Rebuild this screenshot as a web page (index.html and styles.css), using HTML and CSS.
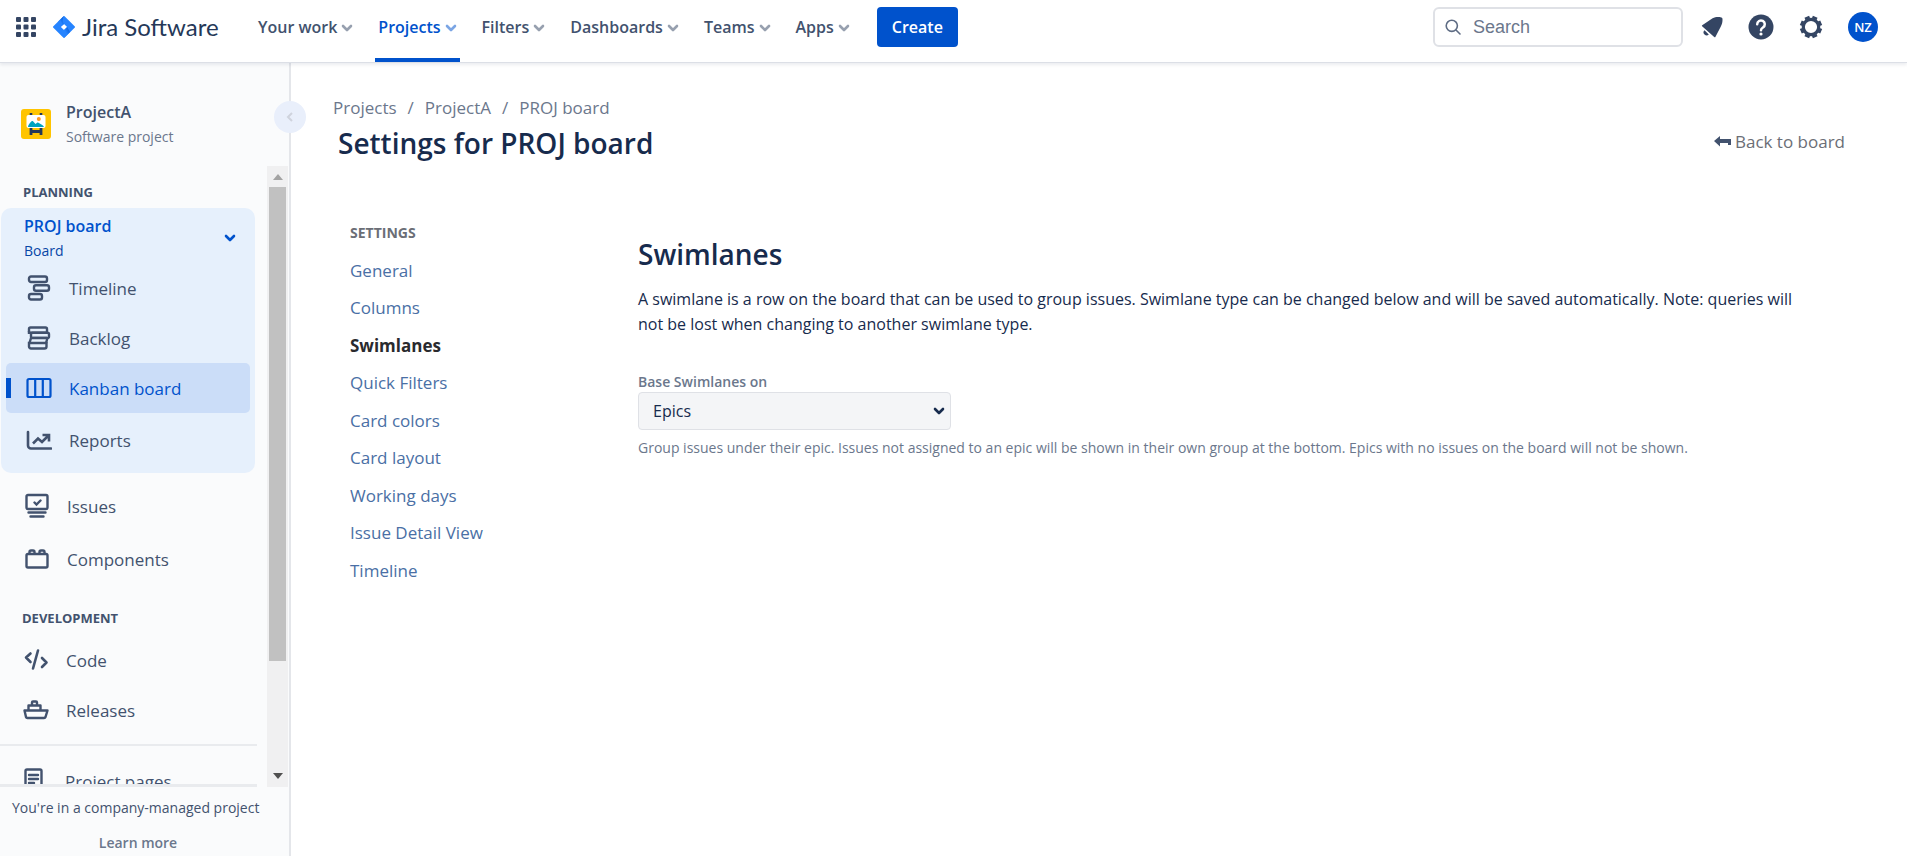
FILE: index.html
```html
<!DOCTYPE html>
<html lang="en">
<head>
<meta charset="utf-8">
<title>Settings for PROJ board - Jira Software</title>
<link rel="stylesheet" href="styles.css">
</head>
<body>
<svg class="defs" aria-hidden="true">
  <symbol id="chevron" viewBox="0 0 12 8"><path d="M2 2l4 4 4-4" fill="none" stroke="currentColor" stroke-width="2.6" stroke-linecap="round" stroke-linejoin="round"/></symbol>
</svg>
<header class="topbar">
  <button class="icon-btn switcher" aria-label="Switch to">
    <svg width="20" height="20" viewBox="0 0 20 20" fill="#344563"><rect width="5" height="5" rx="1"/><rect x="7.5" width="5" height="5" rx="1"/><rect x="15" width="5" height="5" rx="1"/><rect y="7.5" width="5" height="5" rx="1"/><rect x="7.5" y="7.5" width="5" height="5" rx="1"/><rect x="15" y="7.5" width="5" height="5" rx="1"/><rect y="15" width="5" height="5" rx="1"/><rect x="7.5" y="15" width="5" height="5" rx="1"/><rect x="15" y="15" width="5" height="5" rx="1"/></svg>
  </button>
  <a class="brand" href="#">
    <svg width="22" height="22" viewBox="0 0 22 22"><defs><linearGradient id="g1" x1="0.9" y1="0.1" x2="0.4" y2="0.6"><stop offset="0" stop-color="#0052cc"/><stop offset="1" stop-color="#2684ff"/></linearGradient></defs><path fill="#2684ff" d="M10.2.4a1.1 1.1 0 0 1 1.6 0l9.8 9.8a1.1 1.1 0 0 1 0 1.6l-9.8 9.8a1.1 1.1 0 0 1-1.6 0L.4 11.8a1.1 1.1 0 0 1 0-1.6zM11 7.9L7.900 11l3.100 3.100L14.100 11z" fill-rule="evenodd"/><path fill="url(#g1)" d="M11 7.900C9 5.900 9 2.600 11 0l-5.800 5.500 4.100 4.100z"/><path fill="url(#g1)" d="M14.100 11L11 14.100c2 2.200 2 5.300 0 7.900l6-6.100z" opacity=".8"/></svg>
    <span>Jira Software</span>
  </a>
  <nav class="mainnav" aria-label="Main">
    <button class="nav-item">Your work<svg width="12" height="8"><use href="#chevron"/></svg></button>
    <button class="nav-item active">Projects<svg width="12" height="8"><use href="#chevron"/></svg></button>
    <button class="nav-item">Filters<svg width="12" height="8"><use href="#chevron"/></svg></button>
    <button class="nav-item">Dashboards<svg width="12" height="8"><use href="#chevron"/></svg></button>
    <button class="nav-item">Teams<svg width="12" height="8"><use href="#chevron"/></svg></button>
    <button class="nav-item">Apps<svg width="12" height="8"><use href="#chevron"/></svg></button>
  </nav>
  <button class="create">Create</button>
  <div class="tools">
    <label class="search">
      <svg width="16" height="16" viewBox="0 0 16 16" fill="none" stroke="#5e6c84" stroke-width="1.6" stroke-linecap="round"><circle cx="6.800" cy="6.800" r="5.600"/><path d="M11 11l4 4"/></svg>
      <input type="text" placeholder="Search" aria-label="Search">
    </label>
    <button class="icon-btn bell" aria-label="Notifications"><svg width="22" height="22" viewBox="0 0 22 22" fill="#344563"><path d="M1.200 9.200L11.600 2.300C14.300.9 17.500.8 20.300 1.400c1.100.3 1.200 1 1.200 1.900.1 2.500-.4 4.800-1.800 7.400l-5.200 10c-.3.600-.8.700-1.300.2L1.100 10.300c-.4-.4-.4-.8.100-1.100z"/><path d="M3.500 14.200l4.300 4.300a3 3 0 0 1-4.300-4.300z"/></svg></button>
    <button class="icon-btn help" aria-label="Help"><svg width="26" height="26" viewBox="0 0 26 26"><circle cx="13" cy="13" r="12.500" fill="#344563"/><path d="M9.200 10.200a3.800 3.800 0 1 1 5.900 3.200c-1.400.9-2.100 1.300-2.100 2.800" fill="none" stroke="#fff" stroke-width="2.500" stroke-linecap="round"/><circle cx="13" cy="20" r="1.600" fill="#fff"/></svg></button>
    <button class="icon-btn gear" aria-label="Settings"><svg width="24" height="24" viewBox="0 0 24 24" fill="none" stroke="#344563"><circle cx="12" cy="12" r="7.700" stroke-width="3.200"/><g stroke-width="5"><path d="M15.200 4.200l1-2.400M19.800 8.800l2.400-1M19.800 15.200l2.400 1M15.200 19.800l1 2.400M8.800 19.800l-1 2.400M4.200 15.200l-2.400 1M4.200 8.800l-2.400-1M8.800 4.200l-1-2.400"/></g></svg></button>
    <button class="avatar" aria-label="Account">NZ</button>
  </div>
</header>

<div class="shell">
  <aside class="sidebar">
    <div class="project">
      <svg width="30" height="30" viewBox="0 0 30 30"><rect width="30" height="30" rx="3" fill="#ffc400"/><path d="M10 4v3M20 4v3" stroke="#253858" stroke-width="2.600"/><path d="M10 19v7M20 19v7M9 22.500h12" stroke="#253858" stroke-width="2.800"/><rect x="5.500" y="6" width="19" height="13" rx="2" fill="#fff"/><path d="M7 18c0-2 2-4.500 3.600-5.800.5-.4 1-.3 1.400.1l2.500 2.600 1.600-1.100c.5-.3.900-.3 1.300 0 2.300 1.400 5 2.700 5.600 4.200z" fill="#00a3bf"/><circle cx="17.800" cy="10" r="2" fill="#ff991f"/></svg>
      <div>
        <div class="project-name">ProjectA</div>
        <div class="project-type">Software project</div>
      </div>
    </div>
    <div class="scroll-frame">
      <nav class="scroll-body" aria-label="Project">
        <h2 class="group-title">PLANNING</h2>
        <div class="board-group">
          <button class="board-head">
            <span class="board-text"><span class="board-name">PROJ board</span><span class="board-kind">Board</span></span>
            <svg width="12" height="8"><use href="#chevron"/></svg>
          </button>
          <a class="side-link" href="#"><svg width="26" height="26" viewBox="0 0 26 26" fill="none" stroke="currentColor" stroke-width="2.400"><rect x="3" y="1.500" width="18" height="5.500" rx="2"/><rect x="8" y="10.200" width="15" height="5.500" rx="2"/><rect x="3" y="19" width="13" height="5.500" rx="2"/></svg>Timeline</a>
          <a class="side-link" href="#"><svg width="26" height="26" viewBox="0 0 26 26" fill="none" stroke="currentColor" stroke-width="2.400"><rect x="3" y="2.500" width="18" height="5.200" rx="1.500"/><rect x="5" y="7.700" width="18" height="5.200" rx="1.500"/><path d="M3 6v3M5 13l-1.500 5M21.500 13L20 18"/><path d="M4 13h17M3 18h17.500v3.500a2 2 0 0 1-2 2H5a2 2 0 0 1-2-2z"/></svg>Backlog</a>
          <a class="side-link selected" href="#" aria-current="page"><svg width="26" height="26" viewBox="0 0 26 26" fill="none" stroke="currentColor" stroke-width="2.200"><rect x="1.500" y="4" width="23" height="18" rx="1.500"/><path d="M9.200 4v18M16.800 4v18"/></svg>Kanban board</a>
          <a class="side-link reports" href="#"><svg width="26" height="26" viewBox="0 0 26 26" fill="none" stroke="currentColor" stroke-width="2.600"><path d="M2 5v13.500a3 3 0 0 0 3 3h20" stroke-linecap="round"/><path d="M7 16.500l5-5 4 3.500 6.500-6.500M16.500 8H23v6.500"/></svg>Reports</a>
        </div>
        <div class="loose-group">
          <a class="side-link" href="#"><svg width="26" height="26" viewBox="0 0 26 26" fill="none" stroke="currentColor" stroke-width="2.400" stroke-linecap="round"><rect x="2.500" y="2" width="21" height="14" rx="1.500"/><path d="M10.500 9.500l2 2 4-4M4.500 19.500h17M6.500 23.500h13"/></svg>Issues</a>
          <a class="side-link" href="#"><svg width="26" height="26" viewBox="0 0 26 26" fill="none" stroke="currentColor" stroke-width="2.400"><rect x="2.500" y="8" width="21" height="13.500" rx="1.500"/><path d="M5.500 8V6a1.500 1.500 0 0 1 1.500-1.500h2A1.500 1.500 0 0 1 10.500 6v2M15.500 8V6A1.500 1.500 0 0 1 17 4.500h2A1.500 1.500 0 0 1 20.500 6v2"/></svg>Components</a>
        </div>
        <h2 class="group-title dev">DEVELOPMENT</h2>
        <div class="dev-group">
          <a class="side-link" href="#"><svg width="26" height="26" viewBox="0 0 26 26" fill="none" stroke="currentColor" stroke-width="2.600" stroke-linecap="round" stroke-linejoin="round"><path d="M15 3.500l-5 18M7.500 6.500L3 10.500l4.500 4.500M19 11l4.500 4.500L19 20"/></svg>Code</a>
          <a class="side-link" href="#"><svg width="26" height="26" viewBox="0 0 26 26" fill="none" stroke="currentColor" stroke-width="2.400" stroke-linejoin="round"><path d="M1.500 13.500h23l-2 6.500a1.500 1.500 0 0 1-1.400 1H4.400A1.500 1.500 0 0 1 3 20zM5.500 13.500V8.500h12v5M9 8V5.500q0-1 1-1h3q1 0 1 1V8"/></svg>Releases</a>
        </div>
        <a class="side-link pages" href="#"><svg width="26" height="26" viewBox="0 0 26 26" fill="none" stroke="currentColor" stroke-width="2.400" stroke-linecap="round"><rect x="3.500" y="1.500" width="16" height="22" rx="1.500"/><path d="M7 7h9M7 11h9M7 15h5"/></svg>Project pages</a>
      </nav>
      <div class="scrollbar" aria-hidden="true">
        <svg width="10" height="6" viewBox="0 0 10 6"><path d="M0 6l5-6 5 6z" fill="#a3a3a3"/></svg>
        <div class="thumb"></div>
        <svg width="10" height="6" viewBox="0 0 10 6"><path d="M0 0h10L5 6z" fill="#505050"/></svg>
      </div>
    </div>
    <footer class="side-foot">
      <p>You're in a company-managed project</p>
      <a href="#">Learn more</a>
    </footer>
    <button class="collapse" aria-label="Collapse sidebar"><svg width="8" height="10" viewBox="0 0 8 10" fill="none" stroke="#cfd3dd" stroke-width="2"><path d="M6 1L2 5l4 4"/></svg></button>
  </aside>

  <main class="content">
    <nav class="crumbs" aria-label="Breadcrumb"><a href="#">Projects</a><span>/</span><a href="#">ProjectA</a><span>/</span><a href="#">PROJ board</a></nav>
    <div class="title-row">
      <h1>Settings for PROJ board</h1>
      <a class="back" href="#"><svg width="17" height="11" viewBox="0 0 17 11"><path d="M0 5L6 0v3h11v6h-3V7H6v3.500z" fill="#42526e"/></svg>Back to board</a>
    </div>
    <div class="columns">
      <nav class="settings" aria-label="Settings">
        <h2>SETTINGS</h2>
        <ul>
          <li><a href="#">General</a></li>
          <li><a href="#">Columns</a></li>
          <li><a class="current" href="#">Swimlanes</a></li>
          <li><a href="#">Quick Filters</a></li>
          <li><a href="#">Card colors</a></li>
          <li><a href="#">Card layout</a></li>
          <li><a href="#">Working days</a></li>
          <li><a href="#">Issue Detail View</a></li>
          <li><a href="#">Timeline</a></li>
        </ul>
      </nav>
      <section class="panel">
        <h2>Swimlanes</h2>
        <p class="intro">A swimlane is a row on the board that can be used to group issues. Swimlane type can be changed below and will be saved automatically. Note: queries will not be lost when changing to another swimlane type.</p>
        <label for="base">Base Swimlanes on</label>
        <div class="select">
          <select id="base"><option>Epics</option><option>Stories</option><option>Assignees</option><option>No Swimlanes</option></select>
          <svg width="12" height="8"><use href="#chevron"/></svg>
        </div>
        <p class="hint">Group issues under their epic. Issues not assigned to an epic will be shown in their own group at the bottom. Epics with no issues on the board will not be shown.</p>
      </section>
    </div>
  </main>
</div>
</body>
</html>
```

FILE: styles.css
```css
* { box-sizing: border-box; }

body {
  margin: 0;
  height: 100vh;
  display: flex;
  flex-direction: column;
  overflow: hidden;
  background: #fff;
  color: #172b4d;
  font: 17px/25px "Open Sans", "Noto Sans", sans-serif;
}

h1, h2, p, ul { margin: 0; padding: 0; }
ul { list-style: none; }
a { color: inherit; text-decoration: none; }
button { border: 0; padding: 0; background: none; font: inherit; color: inherit; cursor: pointer; }
svg { flex: none; display: block; }
.defs { position: absolute; width: 0; height: 0; }

/* Top bar */
.topbar {
  flex: none;
  display: flex;
  align-items: flex-start;
  height: 63px;
  padding: 7px 29px 0 16px;
  border-bottom: 1px solid #dcdfe6;
  box-shadow: 0 2px 3px rgba(9, 30, 66, 0.08);
  position: relative;
  z-index: 1;
  background: #fff;
}
.icon-btn { display: flex; align-items: center; justify-content: center; height: 40px; }
.brand {
  display: flex;
  align-items: center;
  gap: 7px;
  width: 187px;
  height: 40px;
  margin-left: 17px;
  color: #253858;
  font: 24px/40px Lato, sans-serif;
  white-space: nowrap;
}
.mainnav { display: flex; gap: 19px; margin-left: 15px; }
.nav-item {
  display: flex;
  align-items: center;
  gap: 4px;
  height: 55px;
  padding: 0 3px 10px;
  border-bottom: 4px solid transparent;
  color: #42526e;
  font-size: 16px;
  font-weight: 600;
  white-space: nowrap;
}
.nav-item svg { color: #97a0af; }
.nav-item.active { color: #0052cc; border-color: #0052cc; }
.nav-item.active svg { color: #7ba5e4; }
.create {
  height: 40px;
  width: 81px;
  margin-left: 24px;
  border-radius: 4px;
  background: #0052cc;
  color: #fff;
  font-size: 16px;
  font-weight: 600;
}
.tools { display: flex; align-items: center; margin-left: auto; }
.search {
  display: flex;
  align-items: center;
  gap: 12px;
  width: 250px;
  height: 40px;
  padding: 0 10px;
  border: 2px solid #dfe1e6;
  border-radius: 6px;
}
.search input {
  flex: 1;
  min-width: 0;
  border: 0;
  padding: 0;
  outline: 0;
  background: none;
  font: 18px/24px "Liberation Sans", Arial, sans-serif;
}
.search input::placeholder { color: #6b778c; opacity: 1; }
.bell { margin-left: 18px; }
.help { margin-left: 25px; }
.gear { margin-left: 25px; }
.avatar {
  width: 30px;
  height: 30px;
  margin-left: 25px;
  border-radius: 50%;
  background: #0052cc;
  color: #fff;
  font-size: 13px;
  font-weight: 600;
  line-height: 30px;
}

.shell { flex: 1; min-height: 0; display: flex; }

/* Sidebar */
.sidebar {
  flex: none;
  width: 291px;
  display: flex;
  flex-direction: column;
  border-right: 2px solid #e4e6ea;
  background: #fafbfc;
  color: #42526e;
  position: relative;
}
.project { display: flex; align-items: center; gap: 15px; padding: 36px 21px 17px; height: 103px; }
.project-name { font-size: 16px; font-weight: 600; line-height: 25px; }
.project-type { font-size: 14px; color: #6b778c; line-height: 23px; }
.scroll-frame { flex: 1; min-height: 0; display: flex; justify-content: space-between; padding-right: 1px; }
.scroll-body { width: 257px; overflow: hidden; border-bottom: 3px solid #e9ebee; }
.group-title { padding: 13px 23px 3px; font-size: 13px; line-height: 26px; font-weight: 700; color: #42526e; }
.group-title.dev { padding: 21px 22px 4px; }
.board-group { margin: 0 2px 0 1px; padding: 0 5px 8px; border-radius: 10px; background: #e6f0fc; }
.board-head {
  display: flex;
  align-items: center;
  justify-content: space-between;
  width: 100%;
  height: 55px;
  padding: 5px 14px 0 18px;
  color: #0747a6;
  text-align: left;
}
.board-text { display: flex; flex-direction: column; }
.board-name { font-size: 16px; line-height: 26px; font-weight: 600; color: #0052cc; }
.board-kind { font-size: 14px; line-height: 24px; }
.board-head svg { color: #0052cc; }
.side-link { display: flex; align-items: center; gap: 17px; height: 50px; padding-left: 20px; border-radius: 5px; white-space: nowrap; }
.side-link.selected {
  background: linear-gradient(#0052cc, #0052cc) 0 50% / 5px 20px no-repeat #cbddf8;
  color: #0052cc;
}
.reports { margin-top: 2px; }
.loose-group { display: grid; gap: 3px; padding: 8px 4px 0; }
.dev-group { padding: 0 3px 9px; border-bottom: 2px solid #e9ebee; }
.pages { margin-top: 10px; padding-left: 22px; }
.scrollbar { flex: none; width: 21px; display: flex; flex-direction: column; align-items: center; padding: 8px 0; gap: 7px; background: #f0f0f1; }
.thumb { width: 17px; height: 474px; background: #c1c1c1; }
.scrollbar svg:last-child { margin-top: auto; }
.side-foot { flex: none; height: 69px; padding-top: 8px; font-size: 14px; line-height: 25px; color: #42526e; white-space: nowrap; }
.side-foot p { padding-left: 12px; }
.side-foot a { display: block; width: 276px; margin-top: 10px; text-align: center; color: #6b778c; font-weight: 600; }
.collapse {
  position: absolute;
  top: 38px;
  right: -17px;
  width: 32px;
  height: 32px;
  display: flex;
  align-items: center;
  justify-content: center;
  border-radius: 50%;
  background: #e9effb;
}

/* Content */
.content { flex: 1; min-width: 0; padding: 32px 62px 0 42px; }
.crumbs { display: flex; gap: 11px; font-size: 17px; line-height: 26px; color: #6b778c; }
.title-row { display: flex; align-items: center; justify-content: space-between; padding-left: 5px; }
h1 { font-size: 28px; line-height: 44px; font-weight: 600; }
.back { display: flex; align-items: center; gap: 4px; padding-bottom: 4px; font-size: 17px; color: #6b6e76; }
.columns { display: flex; padding: 54px 0 0 17px; }
.settings { flex: none; width: 288px; }
.settings h2 { font-size: 14px; line-height: 28px; font-weight: 700; color: #6b6e76; }
.settings ul { display: grid; grid-template-rows: repeat(4, 37px 38px) 38px; margin-top: 5px; color: #4a6fa5; }
.settings li { line-height: 37px; }
.settings .current { font-weight: 700; color: #292a2e; }
.panel { flex: 1; min-width: 0; padding-top: 15px; }
.panel h2 { font-size: 28px; line-height: 40px; font-weight: 600; }
.intro { margin-top: 13px; padding-right: 24px; font-size: 16px; }
.panel label { display: block; margin-top: 35px; font-size: 14px; line-height: 20px; font-weight: 600; color: #6b778c; }
.select { display: grid; align-items: center; width: 313px; }
.select select {
  grid-area: 1 / 1;
  appearance: none;
  height: 38px;
  padding: 0 14px;
  border: 1px solid #dfe1e6;
  border-radius: 4px;
  background: #f4f5f7;
  color: #172b4d;
  font: inherit;
  font-size: 16px;
}
.select svg { grid-area: 1 / 1; justify-self: end; margin-right: 6px; pointer-events: none; }
.hint { margin-top: 6px; font-size: 14px; line-height: 24px; color: #6b778c; }
```
